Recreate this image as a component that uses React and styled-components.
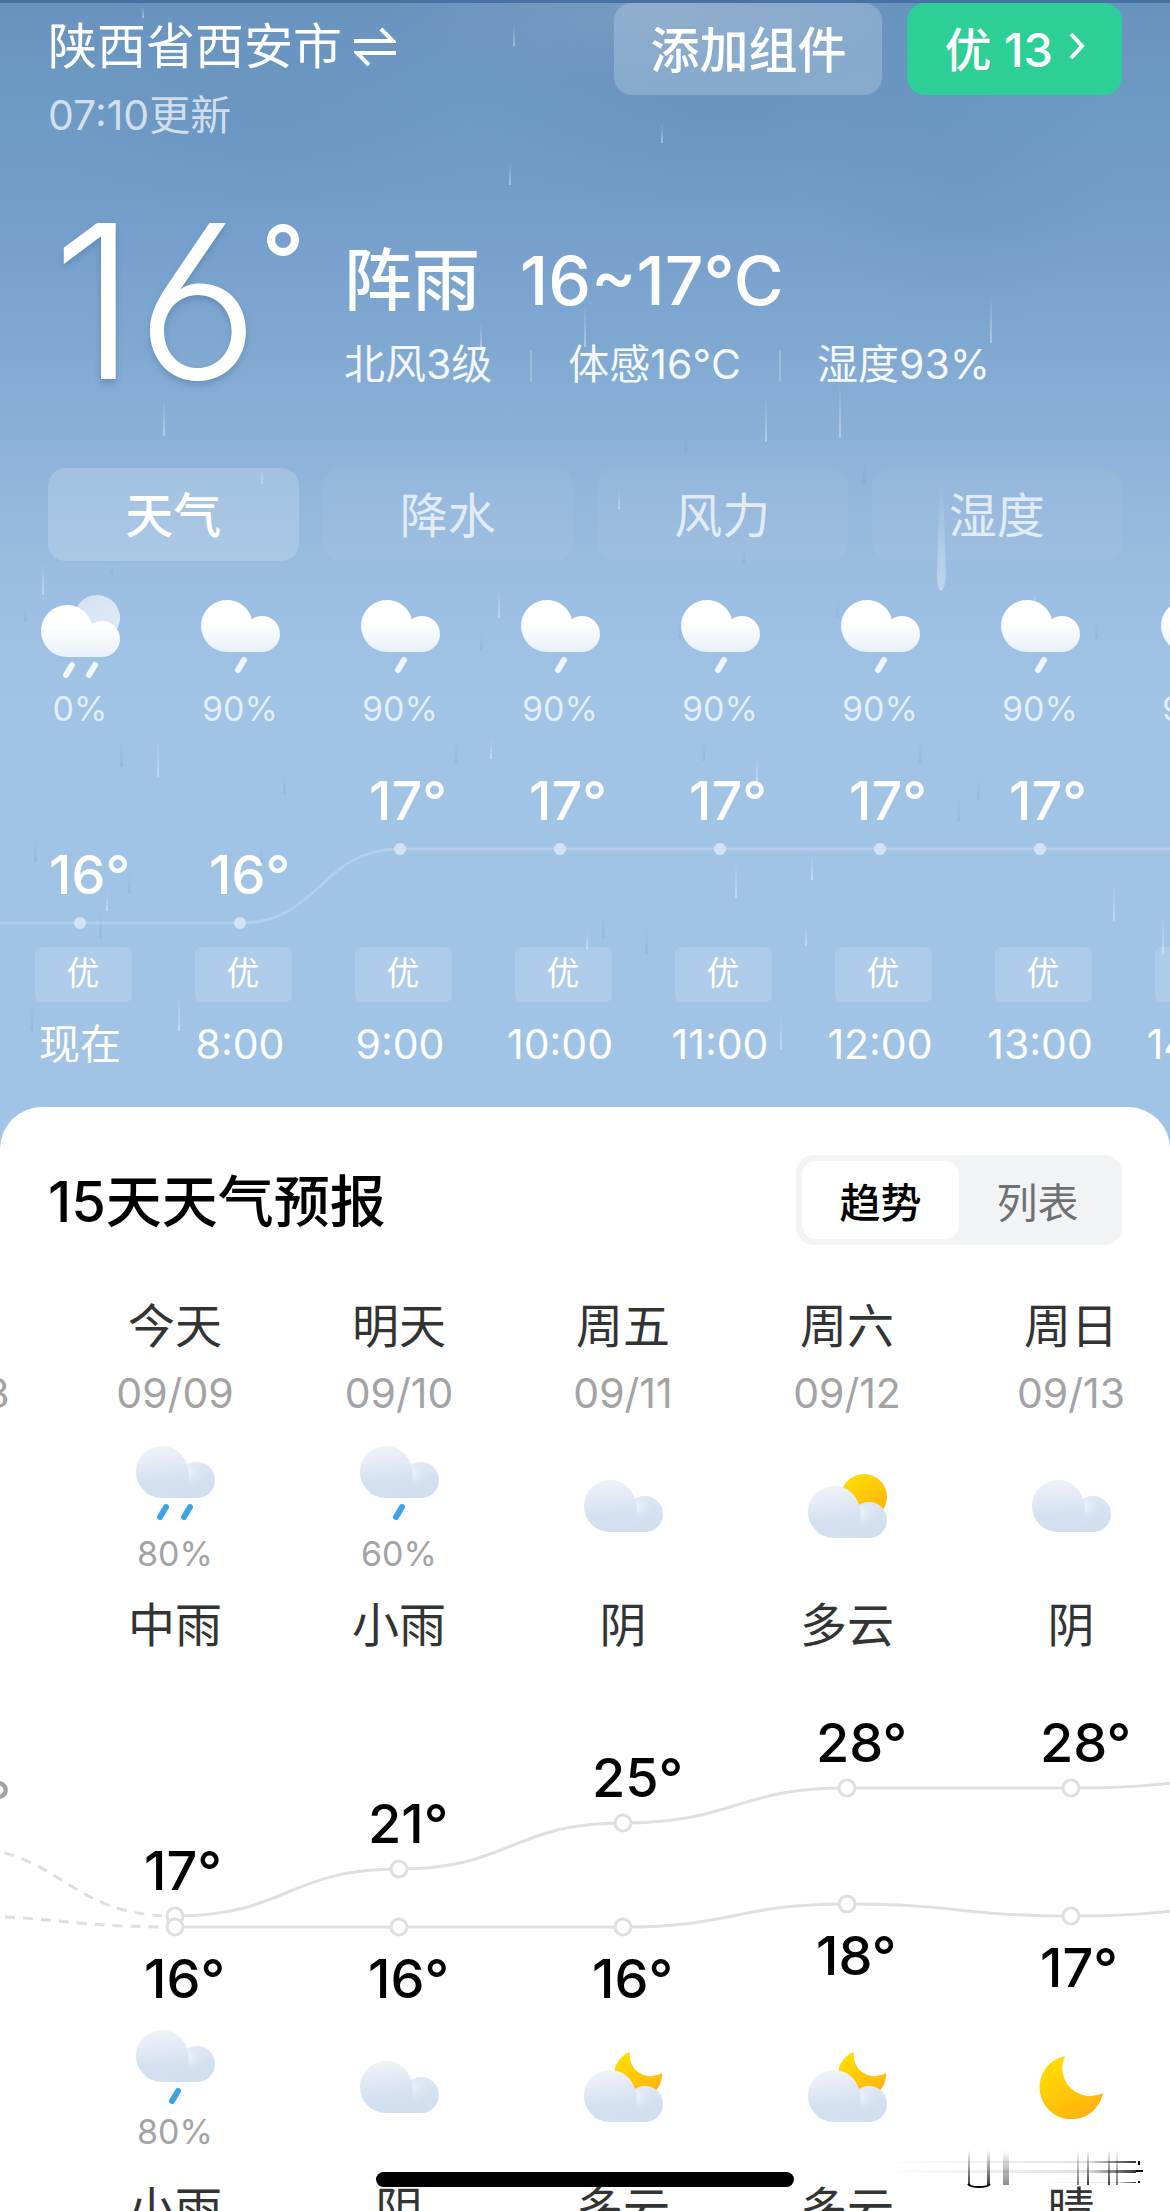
import { useState } from 'react';
import styled, { createGlobalStyle } from 'styled-components';

const HOUR_WIDTH = 160;
const DAY_WIDTH = 224;

const tabs = ['天气', '降水', '风力', '湿度'];

const hours = [
	{ time: '现在', icon: 'showers', rain: '0%', temp: 16 },
	{ time: '8:00', icon: 'rain', rain: '90%', temp: 16 },
	{ time: '9:00', icon: 'rain', rain: '90%', temp: 17 },
	{ time: '10:00', icon: 'rain', rain: '90%', temp: 17 },
	{ time: '11:00', icon: 'rain', rain: '90%', temp: 17 },
	{ time: '12:00', icon: 'rain', rain: '90%', temp: 17 },
	{ time: '13:00', icon: 'rain', rain: '90%', temp: 17 },
	{ time: '14:00', icon: 'rain', rain: '90%', temp: 17 },
];

const days = [
	{ name: '昨天', date: '09/08', high: 23, low: 17, past: true },
	{
		name: '今天',
		date: '09/09',
		high: 17,
		low: 16,
		day: { icon: 'moderate', rain: '80%', text: '中雨' },
		night: { icon: 'light', rain: '80%', text: '小雨' },
	},
	{
		name: '明天',
		date: '09/10',
		high: 21,
		low: 16,
		day: { icon: 'light', rain: '60%', text: '小雨' },
		night: { icon: 'cloud', text: '阴' },
	},
	{
		name: '周五',
		date: '09/11',
		high: 25,
		low: 16,
		day: { icon: 'cloud', text: '阴' },
		night: { icon: 'cloudMoon', text: '多云' },
	},
	{
		name: '周六',
		date: '09/12',
		high: 28,
		low: 18,
		day: { icon: 'cloudSun', text: '多云' },
		night: { icon: 'cloudMoon', text: '多云' },
	},
	{
		name: '周日',
		date: '09/13',
		high: 28,
		low: 17,
		day: { icon: 'cloud', text: '阴' },
		night: { icon: 'moon', text: '晴' },
	},
	{ name: '周一', date: '09/14', high: 29, low: 18 },
];

// x, y, length
const lightDrops = [
	[142, 3, 12], [513, 23, 20], [509, 160, 22], [661, 120, 20], [584, 300, 44],
	[480, 320, 24], [990, 290, 50], [839, 380, 54], [765, 395, 44], [163, 395, 38],
	[261, 465, 16], [42, 560, 32], [498, 585, 30], [618, 488, 18], [157, 738, 36],
	[490, 735, 21], [106, 888, 20], [178, 990, 38], [756, 753, 27], [735, 860, 35],
	[811, 850, 27], [1113, 880, 38], [1162, 910, 42], [780, 1013, 33], [805, 923, 20],
	[586, 928, 18], [1034, 590, 14],
];
const darkDrops = [
	[110, 560, 12], [24, 605, 14], [480, 630, 18], [742, 545, 15], [863, 460, 20],
	[836, 598, 16], [678, 620, 16], [1095, 620, 16], [120, 740, 24], [455, 740, 20],
	[283, 770, 22], [34, 835, 24], [128, 870, 20], [260, 842, 18], [702, 738, 20],
	[919, 738, 22], [977, 775, 22], [957, 792, 26], [602, 912, 24], [645, 925, 26],
	[99, 908, 28], [30, 1000, 28], [684, 438, 10],
];

const CloudShape = ({ fill }) => (
	<path
		fill={fill}
		d="M26 0C38 0 48 8 51 19C54 17 57 16 61 16A18 18 0 0 1 61 52H26A26 26 0 0 1 26 0Z"
	/>
);

const Gradients = () => (
	<svg width="0" height="0" style={{ display: 'block' }} aria-hidden="true">
		<defs>
			<linearGradient id="whiteCloud" x1="0" y1="0" x2="0" y2="1">
				<stop offset="0.4" stopColor="#fff" />
				<stop offset="1" stopColor="#e9f0f8" />
			</linearGradient>
			<linearGradient id="backCloud" x1="0" y1="0" x2="1" y2="1">
				<stop offset="0" stopColor="#d3e0f1" />
				<stop offset="1" stopColor="#e2ecf7" />
			</linearGradient>
			<linearGradient id="greyCloud" x1="0.3" y1="0" x2="0.45" y2="1">
				<stop offset="0" stopColor="#f0f2f9" />
				<stop offset="0.65" stopColor="#d5e1f0" />
				<stop offset="1" stopColor="#d0deef" />
			</linearGradient>
			<radialGradient id="cloudLobe" gradientUnits="userSpaceOnUse" cx="53" cy="26" r="18">
				<stop offset="0" stopColor="#eff3fa" />
				<stop offset="1" stopColor="#d5e1f0" stopOpacity="0" />
			</radialGradient>
			<linearGradient id="gold" x1="0.2" y1="0" x2="0.8" y2="1">
				<stop offset="0" stopColor="#ffdf00" />
				<stop offset="1" stopColor="#ffaf0f" />
			</linearGradient>
		</defs>
	</svg>
);

const GreyCloud = ({ y = 0 }) => (
	<g transform={`translate(0 ${y})`}>
		<CloudShape fill="url(#greyCloud)" />
		<path
			fill="url(#cloudLobe)"
			d="M51 19C54 17 57 16 61 16A18 18 0 0 1 61 52H40A28 28 0 0 0 51 19Z"
		/>
	</g>
);

const Drop = ({ x, y, color }) => (
	<path d={`M${x + 6} ${y + 3}L${x} ${y + 13}`} stroke={color} strokeWidth="6" strokeLinecap="round" />
);

const icons = {
	showers: {
		height: 84,
		art: (
			<>
				<circle cx="56" cy="23" r="23" fill="url(#backCloud)" />
				<g transform="translate(0 10)">
					<CloudShape fill="url(#whiteCloud)" />
				</g>
				<Drop x={25} y={67} color="#eff6fc" />
				<Drop x={48} y={67} color="#eff6fc" />
			</>
		),
	},
	rain: {
		height: 74,
		art: (
			<>
				<CloudShape fill="url(#whiteCloud)" />
				<Drop x={37} y={57} color="#eff6fc" />
			</>
		),
	},
	moderate: {
		height: 74,
		art: (
			<>
				<GreyCloud />
				<Drop x={24} y={58} color="#3fa3e6" />
				<Drop x={48} y={58} color="#3fa3e6" />
			</>
		),
	},
	light: {
		height: 74,
		art: (
			<>
				<GreyCloud />
				<Drop x={36} y={58} color="#3fa3e6" />
			</>
		),
	},
	cloud: { height: 52, art: <GreyCloud /> },
	cloudSun: {
		height: 64,
		art: (
			<>
				<circle cx="56" cy="23" r="23" fill="url(#gold)" />
				<GreyCloud y={12} />
			</>
		),
	},
	cloudMoon: {
		height: 70,
		art: (
			<>
				<path fill="url(#gold)" d="M46 0A24 24 0 1 0 78 21A21 21 0 0 1 46 0Z" />
				<GreyCloud y={18} />
			</>
		),
	},
	moon: {
		height: 63,
		art: <path fill="url(#gold)" d="M33 0A32 32 0 1 0 71 37A28 28 0 0 1 33 0Z" />,
	},
};

const WeatherIcon = ({ name }) => {
	const { height, art } = icons[name];

	return (
		<svg width="79" height={height} viewBox={`0 0 79 ${height}`} fill="none" aria-hidden="true">
			{art}
		</svg>
	);
};

const smoothPath = (points) =>
	points.reduce((path, [x, y], index) => {
		if (index === 0) {
			return `M${x} ${y}`;
		}
		const [prevX, prevY] = points[index - 1];
		const middle = (prevX + x) / 2;
		return `${path}C${middle} ${prevY} ${middle} ${y} ${x} ${y}`;
	}, '');

const GlobalStyle = createGlobalStyle`
	* {
		box-sizing: border-box;
	}

	body {
		margin: 0;
		background-color: #fff;
		font-family: Inter, 'Noto Sans CJK SC', sans-serif;
	}

	button {
		padding: 0;
		border: 0;
		background: none;
		color: inherit;
		font-family: inherit;
		cursor: pointer;
	}

	h1, h2, p {
		margin: 0;
		font-weight: 400;
	}
`;

const Page = styled.main`
	position: relative;
	height: 100vh;
	overflow: hidden;
`;

const Hero = styled.section`
	position: relative;
	padding-bottom: 82px;
	border-top: 3px solid #4673a3;
	color: #fff;
	background:
		radial-gradient(ellipse 260px 110px at 62% 110px, rgba(84, 122, 164, 0.18), transparent),
		radial-gradient(ellipse 160px 170px at 82% 160px, rgba(74, 116, 163, 0.12), transparent),
		radial-gradient(ellipse 220px 100px at 23% 120px, rgba(84, 122, 164, 0.15), transparent),
		radial-gradient(ellipse 260px 70px at 55% 10px, rgba(150, 172, 198, 0.3), transparent),
		linear-gradient(#6893bf 0, #6e9ac6 110px, #759fcb 220px, #7fa8d1 340px, #8fb3da 460px, #9abde1 570px, #a0c3e6 700px, #a0c3e6 100%);
`;

const RainLayer = styled.svg`
	position: absolute;
	top: 0;
	left: 0;
	width: 100%;
	height: 100%;
	pointer-events: none;
`;

const TopBar = styled.header`
	display: flex;
	justify-content: space-between;
	align-items: flex-start;
	padding: 0 48px;
`;

const Place = styled.div`
	padding-top: 12px;
`;

const CityButton = styled.button`
	display: flex;
	align-items: center;
	gap: 12px;
	font-size: 49px;
	line-height: 64px;
`;

const Updated = styled.p`
	margin-top: 8px;
	font-size: 41px;
	line-height: 56px;
	color: rgba(255, 255, 255, 0.7);
`;

const TopActions = styled.div`
	display: flex;
	gap: 25px;
`;

const TopButton = styled.button`
	display: flex;
	align-items: center;
	justify-content: center;
	gap: 16px;
	height: 92px;
	padding: 0 ${({ $good }) => ($good ? 37 : 36)}px 6px;
	border-radius: 18px;
	background-color: ${({ $good }) => ($good ? '#2dcf97' : 'rgba(255, 255, 255, 0.2)')};
	font-size: ${({ $good }) => ($good ? 47 : 49)}px;
	font-weight: 500;
`;

const Current = styled.div`
	display: flex;
	align-items: flex-start;
	margin-top: 59px;
	padding: 0 48px;
`;

const BigTemp = styled.div`
	display: flex;
	width: 296px;
	padding-left: 4px;
	font-feature-settings: 'cv03';
	font-size: 214px;
	font-weight: 300;
	line-height: 200px;
	text-shadow: 0 4px 6px rgba(60, 100, 150, 0.35);
`;

const BigDegree = styled.svg`
	flex: none;
	margin: 20px 0 0 6px;
`;

const Summary = styled.div`
	padding-top: 38px;
`;

const Condition = styled.h1`
	display: flex;
	gap: 40px;
	font-size: 68px;
	font-weight: 500;
	line-height: 80px;
`;

const Details = styled.div`
	display: flex;
	margin-top: 20px;
	font-size: 41px;
	line-height: 48px;
`;

const Detail = styled.span`
	color: rgba(255, 255, 255, 0.92);

	&:not(:last-child)::after {
		content: '';
		display: inline-block;
		width: 2px;
		height: 32px;
		margin: 0 36px 0 38px;
		vertical-align: -3px;
		background-color: rgba(255, 255, 255, 0.22);
	}
`;

const Tabs = styled.div`
	display: grid;
	grid-template-columns: repeat(4, 1fr);
	gap: 24px;
	margin-top: 66px;
	padding: 0 48px;
`;

const Tab = styled.button`
	height: 93px;
	padding-bottom: 6px;
	border-radius: 18px;
	background-color: rgba(255, 255, 255, ${({ $active }) => ($active ? 0.18 : 0.05)});
	color: rgba(255, 255, 255, ${({ $active }) => ($active ? 1 : 0.72)});
	font-size: 48px;
	font-weight: ${({ $active }) => ($active ? 500 : 400)};
`;

const HourScroller = styled.div`
	overflow: hidden;
	margin-top: 34px;
`;

const HourRow = styled.div`
	display: flex;
`;

const HourCell = styled.div`
	display: flex;
	flex: 0 0 ${HOUR_WIDTH}px;
	flex-direction: column;
	align-items: center;
`;

const HourIcon = styled.div`
	display: flex;
	align-items: center;
	height: 84px;
`;

const RainChance = styled.span`
	font-size: 34px;
	line-height: 24px;
	color: ${({ $light }) => ($light ? 'rgba(255, 255, 255, 0.72)' : '#a3a3a5')};
`;

const HourChance = styled(RainChance)`
	margin-top: 18px;
`;

const ChartSvg = styled.svg`
	display: block;
	overflow: visible;
`;

const ChartLabel = styled.text`
	font-size: 54px;
	font-weight: 500;
	fill: ${({ $color }) => $color};
`;

const AirBadge = styled.span`
	width: 97px;
	height: 55px;
	margin-left: 6px;
	border-radius: 6px;
	background-color: rgba(255, 255, 255, 0.15);
	font-size: 33px;
	line-height: 52px;
	text-align: center;
`;

const HourTime = styled.span`
	margin-top: 18px;
	font-size: 41px;
	line-height: 48px;
`;

const Card = styled.section`
	position: relative;
	margin-top: -43px;
	padding-top: 48px;
	border-radius: 42px 42px 0 0;
	background-color: #fff;
	overflow: hidden;
`;

const CardHeader = styled.div`
	display: flex;
	align-items: center;
	justify-content: space-between;
	padding: 0 48px;
`;

const CardTitle = styled.h2`
	padding-bottom: 6px;
	font-size: 56px;
	font-weight: 500;
	color: #000;
`;

const Segmented = styled.div`
	display: flex;
	height: 90px;
	padding: 6px;
	border-radius: 18px;
	background-color: #f2f3f5;
`;

const Segment = styled.button`
	width: 157px;
	border-radius: 14px;
	background-color: ${({ $active }) => ($active ? '#fff' : 'transparent')};
	color: ${({ $active }) => ($active ? '#000' : '#6f7073')};
	font-size: 41px;
	font-weight: ${({ $active }) => ($active ? 500 : 400)};
`;

const DayScroller = styled.div`
	margin: 51px 0 0 -161px;
`;

const DayRow = styled.div`
	display: flex;
`;

const DayCell = styled.div`
	display: flex;
	flex: 0 0 ${DAY_WIDTH}px;
	flex-direction: column;
	align-items: center;
`;

const DayText = styled.span`
	font-size: 47px;
	line-height: 60px;
	color: #333;
`;

const DayDate = styled.span`
	margin: 12px 0 28px;
	font-size: 41px;
	line-height: 50px;
	color: #a3a3a5;
`;

const IconSlot = styled.div`
	display: flex;
	flex-direction: column;
	align-items: center;
	justify-content: center;
	gap: ${({ $night }) => ($night ? 16 : 22)}px;
	height: 120px;
	margin-bottom: ${({ $night }) => ($night ? 32 : 29)}px;
`;

const NightRow = styled(DayRow)`
	margin-top: 17px;
`;

const HomeIndicator = styled.div`
	position: absolute;
	bottom: 24px;
	left: 50%;
	width: 418px;
	height: 15px;
	margin-left: -209px;
	border-radius: 8px;
	background-color: #000;
`;

const Streaks = styled.svg`
	position: absolute;
	right: 24px;
	bottom: 23px;
`;

const Rain = () => (
	<RainLayer aria-hidden="true">
		<defs>
			<linearGradient id="dropLight" x1="0" y1="0" x2="0" y2="1">
				<stop offset="0" stopColor="#fff" stopOpacity="0" />
				<stop offset="1" stopColor="#fff" stopOpacity="0.36" />
			</linearGradient>
			<linearGradient id="dropDark" x1="0" y1="0" x2="0" y2="1">
				<stop offset="0" stopColor="#5f86b0" stopOpacity="0" />
				<stop offset="1" stopColor="#5f86b0" stopOpacity="0.16" />
			</linearGradient>
		</defs>
		{lightDrops.map(([x, y, length]) => (
			<rect key={`${x}-${y}`} x={x} y={y} width="2" height={length} fill="url(#dropLight)" />
		))}
		{darkDrops.map(([x, y, length]) => (
			<rect key={`${x}-${y}`} x={x} y={y} width="3" height={length} fill="url(#dropDark)" />
		))}
		<path d="M940 478H943L946 570Q945 587 941 588Q937 587 937 570Z" fill="url(#dropLight)" />
	</RainLayer>
);

const HourChart = () => {
	const points = hours.map(({ temp }, index) => [HOUR_WIDTH * (index + 0.5), 202 - (temp - 16) * 74]);
	const line = smoothPath([[0, points[0][1]], ...points]);

	return (
		<ChartSvg width={HOUR_WIDTH * hours.length} height="226">
			<path d={line} fill="none" stroke="#fff" strokeOpacity="0.2" strokeWidth="3" />
			{points.map(([x, y], index) => (
				<g key={x}>
					<circle cx={x} cy={y} r="6" fill="#d3e3f4" />
					<ChartLabel x={x - 31} y={y - 29} $color="#fff">
						{hours[index].temp}°
					</ChartLabel>
				</g>
			))}
		</ChartSvg>
	);
};

const DayChart = () => {
	const toPoints = (key) =>
		days.map((day, index) => [DAY_WIDTH * (index + 0.5), Math.round(133 + (28 - day[key]) * 11.6)]);
	const series = [
		{ key: 'high', points: toPoints('high'), offset: -26 },
		{ key: 'low', points: toPoints('low'), offset: 71 },
	];

	return (
		<ChartSvg width={DAY_WIDTH * days.length} height="355">
			{series.map(({ key, points, offset }) => (
				<g key={key} fill="none" stroke="#dfdfe1" strokeWidth="3">
					<path d={smoothPath(points.slice(0, 2))} strokeDasharray="10 8" />
					<path d={smoothPath(points.slice(1))} />
					{points.map(([x, y], index) => (
						<g key={x}>
							<circle cx={x} cy={y} r="8" fill="#fff" />
							<ChartLabel
								x={x - 31}
								y={y + offset}
								stroke="none"
								$color={days[index].past ? '#a3a3a5' : '#000'}
							>
								{days[index][key]}°
							</ChartLabel>
						</g>
					))}
				</g>
			))}
		</ChartSvg>
	);
};

const Forecast = ({ value, night }) => (
	<>
		<IconSlot $night={night}>
			{value && <WeatherIcon name={value.icon} />}
			{value?.rain && <RainChance>{value.rain}</RainChance>}
		</IconSlot>
		<DayText>{value?.text}</DayText>
	</>
);

const App = () => {
	const [tab, setTab] = useState(tabs[0]);
	const [view, setView] = useState('趋势');

	return (
		<Page>
			<GlobalStyle />
			<Gradients />
			<Hero>
				<Rain />
				<TopBar>
					<Place>
						<CityButton>
							陕西省西安市
							<svg width="42" height="40" viewBox="0 0 42 40" fill="none" stroke="#fff" strokeWidth="4">
								<path d="M0 14H39L27 2M42 26H3L15 38" />
							</svg>
						</CityButton>
						<Updated>07:10更新</Updated>
					</Place>
					<TopActions>
						<TopButton>添加组件</TopButton>
						<TopButton $good>
							优 13
							<svg width="16" height="28" viewBox="0 0 16 28" fill="none" stroke="#fff" strokeWidth="4">
								<path d="M2 2L13 14L2 26" />
							</svg>
						</TopButton>
					</TopActions>
				</TopBar>

				<Current>
					<BigTemp>
						16
						<BigDegree width="36" height="36" viewBox="0 0 36 36" fill="none" stroke="#fff" strokeWidth="8">
							<circle cx="18" cy="18" r="12" />
						</BigDegree>
					</BigTemp>
					<Summary>
						<Condition>
							<span>阵雨</span>
							<span>16~17°C</span>
						</Condition>
						<Details>
							<Detail>北风3级</Detail>
							<Detail>体感16°C</Detail>
							<Detail>湿度93%</Detail>
						</Details>
					</Summary>
				</Current>

				<Tabs>
					{tabs.map((name) => (
						<Tab key={name} $active={name === tab} onClick={() => setTab(name)}>
							{name}
						</Tab>
					))}
				</Tabs>

				<HourScroller>
					<HourRow>
						{hours.map(({ time, icon, rain }) => (
							<HourCell key={time}>
								<HourIcon>
									<WeatherIcon name={icon} />
								</HourIcon>
								<HourChance $light>{rain}</HourChance>
							</HourCell>
						))}
					</HourRow>
					<HourChart />
					<HourRow>
						{hours.map(({ time }) => (
							<HourCell key={time}>
								<AirBadge>优</AirBadge>
								<HourTime>{time}</HourTime>
							</HourCell>
						))}
					</HourRow>
				</HourScroller>
			</Hero>

			<Card>
				<CardHeader>
					<CardTitle>15天天气预报</CardTitle>
					<Segmented>
						{['趋势', '列表'].map((name) => (
							<Segment key={name} $active={name === view} onClick={() => setView(name)}>
								{name}
							</Segment>
						))}
					</Segmented>
				</CardHeader>
				<DayScroller>
					<DayRow>
						{days.map(({ name, date, day }) => (
							<DayCell key={date}>
								<DayText>{name}</DayText>
								<DayDate>{date}</DayDate>
								<Forecast value={day} />
							</DayCell>
						))}
					</DayRow>
					<DayChart />
					<NightRow>
						{days.map(({ date, night }) => (
							<DayCell key={date}>
								<Forecast value={night} night />
							</DayCell>
						))}
					</NightRow>
				</DayScroller>
			</Card>

			<Streaks width="250" height="38" viewBox="0 0 250 38" fill="none" aria-hidden="true">
				<defs>
					<linearGradient id="streakDown" x1="0" y1="0" x2="0" y2="1">
						<stop offset="0" stopColor="#000" stopOpacity="0" />
						<stop offset="1" stopColor="#000" stopOpacity="0.75" />
					</linearGradient>
					<linearGradient id="streakRight" x1="0" y1="0" x2="1" y2="0">
						<stop offset="0" stopColor="#000" stopOpacity="0.01" />
						<stop offset="0.8" stopColor="#000" stopOpacity="0.12" />
						<stop offset="1" stopColor="#000" stopOpacity="0.8" />
					</linearGradient>
				</defs>
				<g fill="url(#streakRight)">
					<rect x="0" y="11" width="240" height="2" />
					<rect x="0" y="20" width="240" height="3" />
					<rect x="150" y="32" width="90" height="1" />
				</g>
				<g fill="url(#streakDown)">
					<rect x="72" y="0" width="2" height="35" />
					<rect x="91" y="0" width="3" height="35" />
					<rect x="107" y="0" width="6" height="35" opacity="0.6" />
					<rect x="181" y="0" width="2" height="35" opacity="0.7" />
					<rect x="191" y="0" width="2" height="35" />
					<rect x="212" y="0" width="2" height="35" />
					<rect x="220" y="0" width="2" height="35" opacity="0.7" />
				</g>
				<path d="M72 34Q74 37 83 37Q92 37 94 34M240 21H247M242 32H244M243 11V15" stroke="#000" strokeWidth="2" />
			</Streaks>
			<HomeIndicator />
		</Page>
	);
};

export default App;
